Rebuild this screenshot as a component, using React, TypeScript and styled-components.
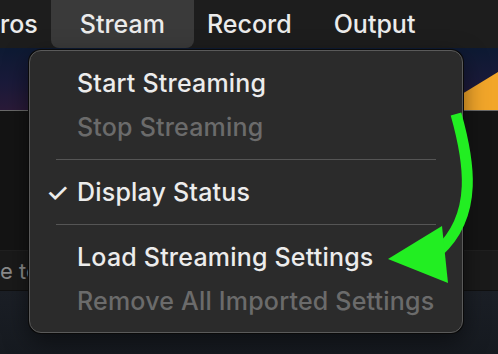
import styled, { createGlobalStyle } from 'styled-components'

const GlobalStyle = createGlobalStyle`
  html, body {
    margin: 0;
    padding: 0;
    background: #141414;
  }
  body {
    font-family: Inter, 'Noto Sans', 'Liberation Sans', sans-serif;
    -webkit-font-smoothing: antialiased;
  }
`

const Page = styled.div`
  position: relative;
  width: 498px;
  height: 354px;
  overflow: hidden;
  display: flex;
  flex-direction: column;
  background: #141414;
`

const MenuBar = styled.div`
  height: 48px;
  flex: none;
  display: flex;
  align-items: stretch;
  background: #1d1d1d;
`

const MenuTitle = styled.div<{ $active?: boolean; $first?: boolean }>`
  display: flex;
  align-items: center;
  padding: 0 ${(p) => (p.$active ? 29 : 21)}px;
  padding-left: ${(p) => (p.$first ? 0 : p.$active ? 29 : 21)}px;
  margin: 0 ${(p) => (p.$active ? -8 : 0)}px;
  border-radius: 0 0 8px 8px;
  background: ${(p) => (p.$active ? '#3a3a3a' : 'transparent')};
  color: #ebebeb;
  font-size: 25px;
  font-weight: 500;
  white-space: nowrap;
`

const Preview = styled.div`
  height: 62px;
  flex: none;
  background: linear-gradient(180deg, #0d1a33 0%, #1a1a3a 55%, #2a1a38 100%);
  border-bottom: 1px solid #6a6a6a;
`

const PreviewShape = styled.svg`
  display: block;
  width: 100%;
  height: 100%;
`

const Panel = styled.div`
  height: 139px;
  flex: none;
  background: #141414;
`

const InputBand = styled.div`
  height: 39px;
  flex: none;
  display: flex;
  align-items: center;
  background: #1a1a1a;
  border-top: 1px solid #202020;
  border-bottom: 1px solid #101010;
  color: #8a8a8a;
  font-size: 22px;
  white-space: nowrap;
`

const Footer = styled.div`
  flex: 1;
  background: linear-gradient(180deg, #1b1f26 0%, #161a20 100%);
`

const Dropdown = styled.div`
  position: absolute;
  left: 29px;
  top: 50px;
  width: 434px;
  box-sizing: border-box;
  padding: 10px 0 9px;
  background: #2b2b2b;
  border: 1px solid #5a5a5a;
  border-radius: 12px;
  box-shadow: 0 0 0 1px #0a0a0a, 0 8px 24px rgba(0, 0, 0, 0.5);
`

const Item = styled.div<{ $disabled?: boolean }>`
  height: 44px;
  display: flex;
  align-items: center;
  padding-left: 47px;
  position: relative;
  color: ${(p) => (p.$disabled ? '#6b6b6b' : '#ececec')};
  font-size: 25px;
  font-weight: 500;
  letter-spacing: 0.2px;
  white-space: nowrap;
`

const Check = styled.span`
  position: absolute;
  left: 16px;
  top: 50%;
  transform: translateY(-50%);
  font-size: 26px;
`

const Separator = styled.div`
  height: 1px;
  margin: 10px 26px;
  background: #555555;
`

const Arrow = styled.svg`
  position: absolute;
  left: 0;
  top: 0;
  pointer-events: none;
`

export default function App() {
  return (
    <>
      <GlobalStyle />
      <Page>
        <MenuBar>
          <MenuTitle $first>ros</MenuTitle>
          <MenuTitle $active>Stream</MenuTitle>
          <MenuTitle>Record</MenuTitle>
          <MenuTitle>Output</MenuTitle>
        </MenuBar>
        <Preview>
          <PreviewShape viewBox="0 0 498 62" preserveAspectRatio="none">
            <polygon points="462,46 498,24 498,62 462,62" fill="#f2a62a" />
          </PreviewShape>
        </Preview>
        <Panel />
        <InputBand>e te</InputBand>
        <Footer />

        <Dropdown>
          <Item>Start Streaming</Item>
          <Item $disabled>Stop Streaming</Item>
          <Separator />
          <Item>
            <Check>✓</Check>
            Display Status
          </Item>
          <Separator />
          <Item>Load Streaming Settings</Item>
          <Item $disabled>Remove All Imported Settings</Item>
        </Dropdown>

        <Arrow width="498" height="354" viewBox="0 0 498 354">
          <path
            d="M456 114 C469 160, 479 215, 438 252"
            fill="none"
            stroke="#22ee22"
            strokeWidth="11"
          />
          <polygon points="388,259 442,226 448,283" fill="#22ee22" />
        </Arrow>
      </Page>
    </>
  )
}
